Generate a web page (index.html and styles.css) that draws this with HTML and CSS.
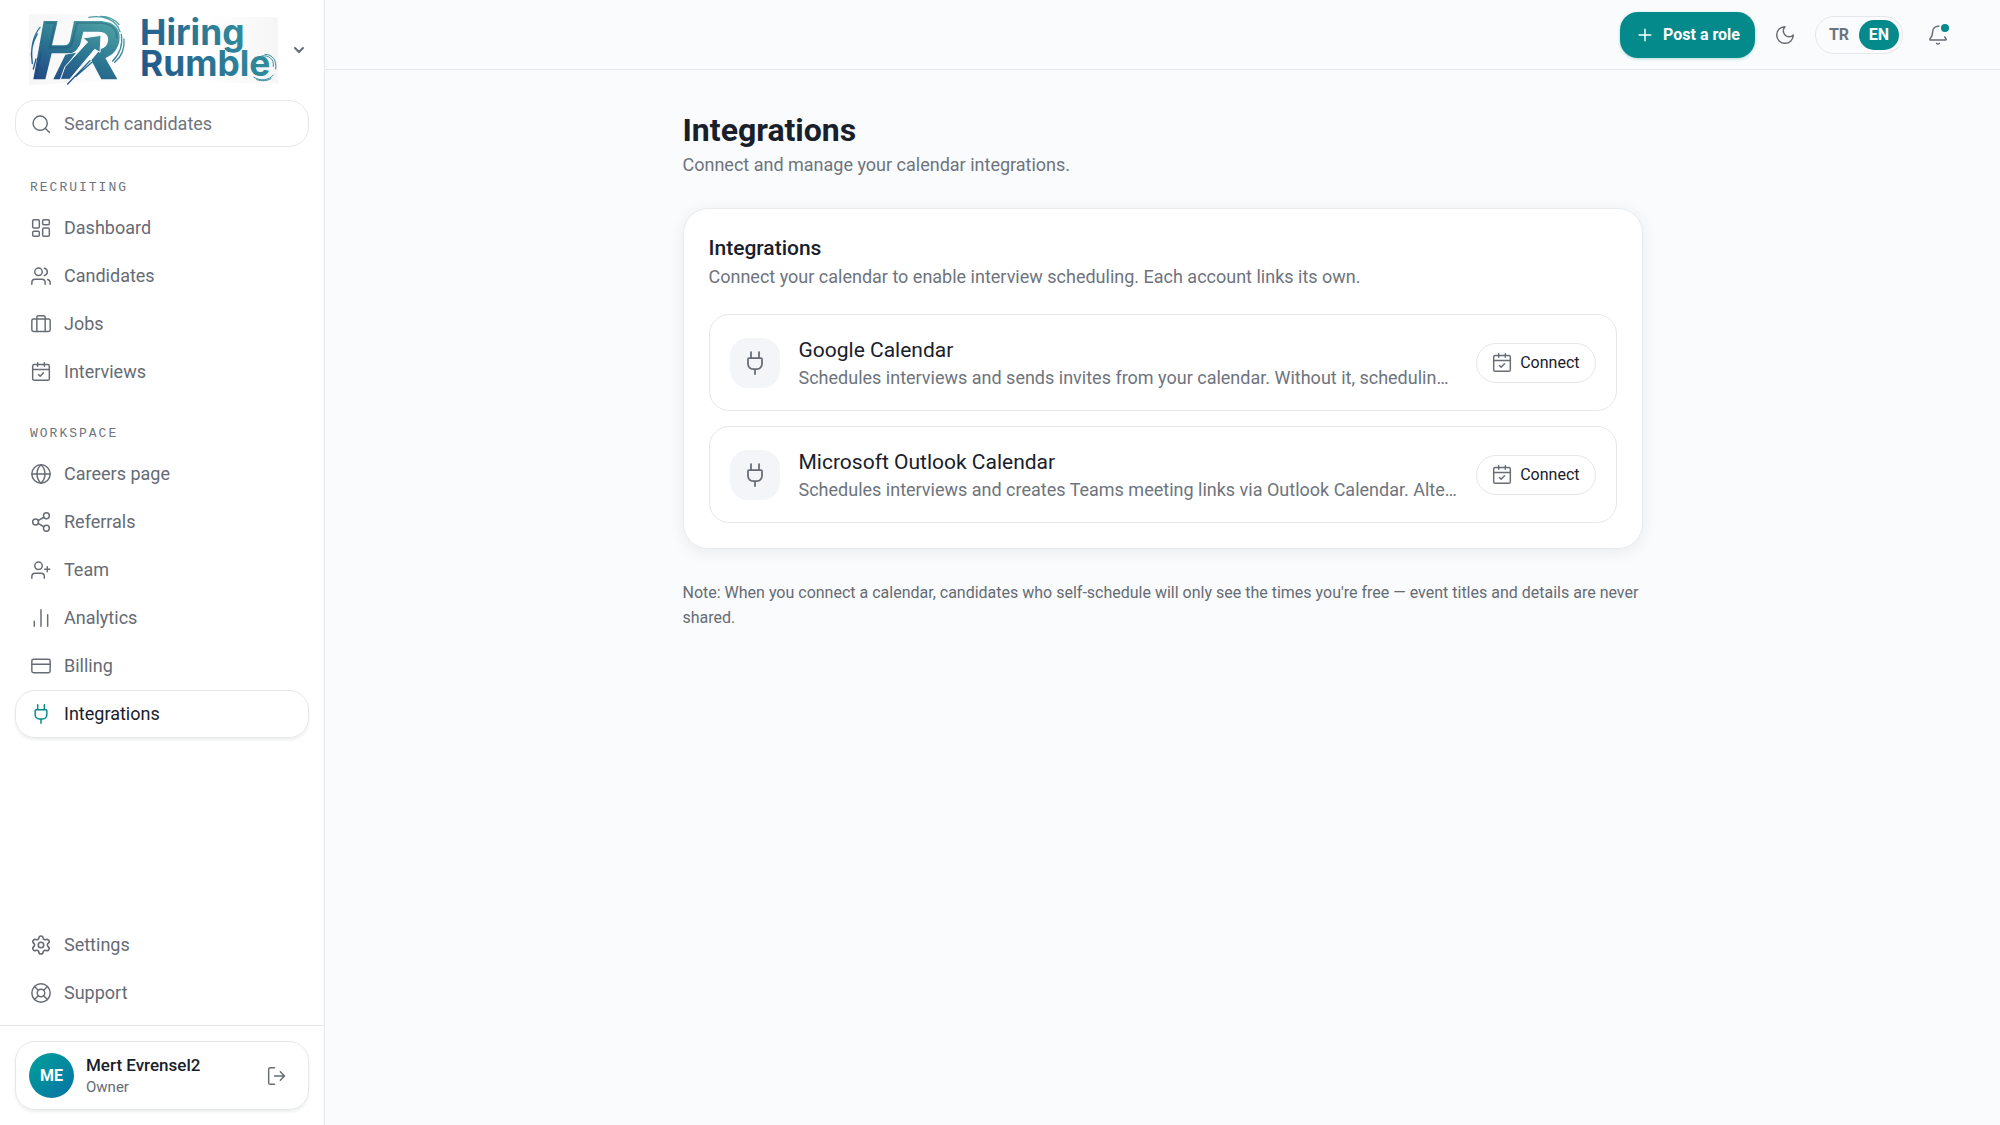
FILE: index.html
```html
<!DOCTYPE html>
<html lang="en">
<head>
    <meta charset="UTF-8">
    <meta name="viewport" content="width=device-width, initial-scale=1.0">
    <title>Integrations - Hiring Rumble</title>
    <link rel="stylesheet" href="styles.css">
</head>
<body>
    <svg class="sprite" aria-hidden="true">
        <symbol id="i-search" viewBox="0 0 24 24"><circle cx="11" cy="11" r="8.500"/><path d="m22 22-5-5"/></symbol>
        <symbol id="i-chevron" viewBox="0 0 24 24"><path d="m6 9 6 6 6-6"/></symbol>
        <symbol id="i-dashboard" viewBox="0 0 24 24"><rect x="2" y="2" width="8" height="10" rx="1.500"/><rect x="14" y="2" width="8" height="6" rx="1.500"/><rect x="14" y="12" width="8" height="10" rx="1.500"/><rect x="2" y="16" width="8" height="6" rx="1.500"/></symbol>
        <symbol id="i-users" viewBox="0 0 24 24"><path d="M17 22v-2a4 4 0 0 0-4-4H5a4 4 0 0 0-4 4v2"/><circle cx="9" cy="7" r="4.500"/><path d="M23 22v-2a4 4 0 0 0-3-3.870M16 2.600a4.500 4.500 0 0 1 0 8.800"/></symbol>
        <symbol id="i-briefcase" viewBox="0 0 24 24"><rect x="1" y="6" width="22" height="15" rx="2"/><path d="M17 21V4a2 2 0 0 0-2-2H9a2 2 0 0 0-2 2v17"/></symbol>
        <symbol id="i-calendar" viewBox="0 0 24 24"><path d="M8 1v4M16 1v4M2 9h20"/><rect x="2" y="3" width="20" height="19" rx="2"/><path d="m9 15 2 2 4-4"/></symbol>
        <symbol id="i-globe" viewBox="0 0 24 24"><circle cx="12" cy="12" r="11"/><path d="M12 1a15 15 0 0 0 0 22 15 15 0 0 0 0-22M1 12h22"/></symbol>
        <symbol id="i-share" viewBox="0 0 24 24"><circle cx="18.500" cy="4.500" r="3.500"/><circle cx="5.500" cy="12" r="3.500"/><circle cx="18.500" cy="19.500" r="3.500"/><path d="m8.500 13.700 7 4M15.500 6.300l-7 4"/></symbol>
        <symbol id="i-user-plus" viewBox="0 0 24 24"><path d="M16 22v-2a4 4 0 0 0-4-4H5a4 4 0 0 0-4 4v2"/><circle cx="9" cy="7" r="4.500"/><path d="M19.500 8v6M22.500 11h-6"/></symbol>
        <symbol id="i-chart" viewBox="0 0 24 24"><path d="M12 22V2M20 22V8M4 22v-6"/></symbol>
        <symbol id="i-card" viewBox="0 0 24 24"><rect x="1" y="4" width="22" height="16" rx="2"/><path d="M1 10h22"/></symbol>
        <symbol id="i-plug" viewBox="0 0 24 24"><path d="M12 23v-5M16 7V1M8 7V1M18 7a1 1 0 0 1 1 1v5a5 5 0 0 1-5 5h-4a5 5 0 0 1-5-5V8a1 1 0 0 1 1-1z"/></symbol>
        <symbol id="i-settings" viewBox="1 1 22 22"><path d="M9.671 4.136a2.34 2.34 0 0 1 4.659 0 2.34 2.34 0 0 0 3.319 1.915 2.34 2.34 0 0 1 2.33 4.033 2.34 2.34 0 0 0 0 3.831 2.34 2.34 0 0 1-2.33 4.033 2.34 2.34 0 0 0-3.319 1.915 2.34 2.34 0 0 1-4.659 0 2.34 2.34 0 0 0-3.32-1.915 2.34 2.34 0 0 1-2.33-4.033 2.34 2.34 0 0 0 0-3.831A2.34 2.34 0 0 1 6.35 6.051a2.34 2.34 0 0 0 3.319-1.915"/><circle cx="12" cy="12" r="3"/></symbol>
        <symbol id="i-support" viewBox="0 0 24 24"><circle cx="12" cy="12" r="11"/><circle cx="12" cy="12" r="4.500"/><path d="m4.200 4.200 4.600 4.600M15.200 8.800l4.600-4.600M15.200 15.200l4.600 4.600M8.800 15.200l-4.600 4.600"/></symbol>
        <symbol id="i-logout" viewBox="0 0 24 24"><path d="M9 22H4a2 2 0 0 1-2-2V4a2 2 0 0 1 2-2h5M16 17l5-5-5-5M21 12H9"/></symbol>
        <symbol id="i-plus" viewBox="0 0 24 24"><path d="M5 12h14M12 5v14"/></symbol>
        <symbol id="i-moon" viewBox="0 0 24 24"><path d="M12 2a7 7 0 0 0 10 10 10 10 0 1 1-10-10Z"/></symbol>
        <symbol id="i-bell" viewBox="0 0 24 24"><path d="M10.300 22a2 2 0 0 0 3.400 0M13 1.500A6.500 6.500 0 0 0 5.600 8c0 4.600-1.300 6.200-3.100 8.600a.8.8 0 0 0 .6 1.400h18a.8.8 0 0 0 .7-1.200c-.6-.8-1.200-1.500-1.700-2.600"/></symbol>
    </svg>

    <div class="app">
        <aside class="sidebar">
            <button class="brand" aria-label="Hiring Rumble">
                <svg class="logo" viewBox="87 42 747 213" aria-hidden="true">
                    <defs>
                        <linearGradient id="mark" gradientUnits="userSpaceOnUse" x1="150" y1="250" x2="240" y2="40">
                            <stop offset="0" stop-color="#234a86"/>
                            <stop offset="0.5" stop-color="#2b7591"/>
                            <stop offset="1" stop-color="#4a9ea3"/>
                        </linearGradient>
                        <linearGradient id="word" gradientUnits="userSpaceOnUse" x1="430" y1="230" x2="700" y2="60">
                            <stop offset="0" stop-color="#21568a"/>
                            <stop offset="1" stop-color="#2f8a9b"/>
                        </linearGradient>
                        <linearGradient id="paper">
                            <stop offset="0" stop-color="#f6f6f7"/>
                            <stop offset="0.4" stop-color="#ffffff"/>
                            <stop offset="0.7" stop-color="#ffffff"/>
                            <stop offset="1" stop-color="#f6f6f7"/>
                        </linearGradient>
                    </defs>
                    <path d="M87 42h130l617 10v198l-550-5-197 10z" fill="url(#paper)"/>
                    <!-- H -->
                    <path d="M131 63h42l-17 73h36c10 0 15-5 18-14l12-59h32l-17 71c-4 15-12 23-27 26l-55 0-19 78h-36z" fill="url(#mark)"/>
                    <!-- R -->
                    <path d="M240 63h56c48 0 69 26 62 61-5 25-20 42-42 50l36 64h-48l-30-57 28-34c13-3 20-12 22-24 3-17-8-28-28-28h-46l-10 40-12 14z" fill="url(#mark)"/>
                    <path d="M196 164l32-6-32 42-14 38h-22z" fill="url(#mark)"/>
                    <!-- arrow -->
                    <path d="M303 106l-54 8 14 12-68 74-14 38h28l75-90 16 9z" fill="url(#mark)" stroke="#f3f9f9" stroke-width="3"/>
                    <path d="M137 69h28l-16 74h48c11 0 17-6 20-17l14-57h62c41 0 59 18 57 46M106 233l18-76" fill="none" stroke="#173d67" stroke-opacity="0.3" stroke-width="5"/>
                    <g fill="none" stroke="url(#mark)" stroke-width="4" stroke-linecap="round">
                        <path d="M267 52c45-8 82 8 93 43M302 49c26 0 43 10 55 25M364 103c5 34-3 57-26 80M372 117c2 27-6 52-28 70"/>
                        <path d="M120 82c-23 28-29 62-23 109M112 102c-17 30-20 57-16 77M100 207l8-30M203 252l67-70M228 229l53-47"/>
                    </g>
                    <text class="wordmark" x="420" y="136" fill="url(#word)">Hiring</text>
                    <text class="wordmark" x="420" y="229" fill="url(#word)">Rumble</text>
                    <g fill="none" stroke="#358b9c" stroke-width="3" stroke-linecap="round">
                        <path d="M785 168c22-4 38 10 35 31M795 163c23 0 36 18 32 44M762 232c20 12 44 10 58-7M770 239c16 5 31 4 43-3"/>
                    </g>
                </svg>
                <svg class="icon chevron"><use href="#i-chevron"/></svg>
            </button>

            <label class="search">
                <svg class="icon"><use href="#i-search"/></svg>
                <input type="search" placeholder="Search candidates" aria-label="Search candidates">
            </label>

            <nav class="nav">
                <h2 class="nav-title">RECRUITING</h2>
                <a class="nav-link" href="#"><svg class="icon"><use href="#i-dashboard"/></svg>Dashboard</a>
                <a class="nav-link" href="#"><svg class="icon"><use href="#i-users"/></svg>Candidates</a>
                <a class="nav-link" href="#"><svg class="icon"><use href="#i-briefcase"/></svg>Jobs</a>
                <a class="nav-link" href="#"><svg class="icon"><use href="#i-calendar"/></svg>Interviews</a>
            </nav>
            <nav class="nav">
                <h2 class="nav-title">WORKSPACE</h2>
                <a class="nav-link" href="#"><svg class="icon"><use href="#i-globe"/></svg>Careers page</a>
                <a class="nav-link" href="#"><svg class="icon"><use href="#i-share"/></svg>Referrals</a>
                <a class="nav-link" href="#"><svg class="icon"><use href="#i-user-plus"/></svg>Team</a>
                <a class="nav-link" href="#"><svg class="icon"><use href="#i-chart"/></svg>Analytics</a>
                <a class="nav-link" href="#"><svg class="icon"><use href="#i-card"/></svg>Billing</a>
                <a class="nav-link active" href="#" aria-current="page"><svg class="icon"><use href="#i-plug"/></svg>Integrations</a>
            </nav>
            <nav class="nav nav-bottom">
                <a class="nav-link" href="#"><svg class="icon"><use href="#i-settings"/></svg>Settings</a>
                <a class="nav-link" href="#"><svg class="icon"><use href="#i-support"/></svg>Support</a>
            </nav>

            <div class="account">
                <div class="account-card">
                    <span class="avatar">ME</span>
                    <div class="account-text">
                        <div class="account-name">Mert Evrensel2</div>
                        <div class="account-role">Owner</div>
                    </div>
                    <button class="icon-button" aria-label="Log out"><svg class="icon"><use href="#i-logout"/></svg></button>
                </div>
            </div>
        </aside>

        <div class="page">
            <header class="topbar">
                <button class="post-button"><svg class="icon"><use href="#i-plus"/></svg>Post a role</button>
                <button class="icon-button" aria-label="Dark mode"><svg class="icon"><use href="#i-moon"/></svg></button>
                <div class="lang">
                    <button class="lang-option">TR</button>
                    <button class="lang-option selected">EN</button>
                </div>
                <button class="icon-button bell" aria-label="Notifications">
                    <svg class="icon"><use href="#i-bell"/></svg>
                    <span class="dot"></span>
                </button>
            </header>

            <main class="content">
                <h1>Integrations</h1>
                <p class="lead">Connect and manage your calendar integrations.</p>

                <section class="card">
                    <h2>Integrations</h2>
                    <p class="lead">Connect your calendar to enable interview scheduling. Each account links its own.</p>
                    <div class="rows">
                        <div class="row">
                            <span class="row-icon"><svg class="icon"><use href="#i-plug"/></svg></span>
                            <div class="row-text">
                                <h3>Google Calendar</h3>
                                <p>Schedules interviews and sends invites from your calendar. Without it, scheduling is off.</p>
                            </div>
                            <button class="connect"><svg class="icon"><use href="#i-calendar"/></svg>Connect</button>
                        </div>
                        <div class="row">
                            <span class="row-icon"><svg class="icon"><use href="#i-plug"/></svg></span>
                            <div class="row-text">
                                <h3>Microsoft Outlook Calendar</h3>
                                <p>Schedules interviews and creates Teams meeting links via Outlook Calendar. Alternative.</p>
                            </div>
                            <button class="connect"><svg class="icon"><use href="#i-calendar"/></svg>Connect</button>
                        </div>
                    </div>
                </section>

                <p class="note">Note: When you connect a calendar, candidates who self-schedule will only see the times you're free — event titles and details are never shared.</p>
            </main>
        </div>
    </div>
</body>
</html>
```

FILE: styles.css
```css
* {
    box-sizing: border-box;
}
body {
    margin: 0;
    font-family: Roboto, "Liberation Sans", sans-serif;
    font-size: 18px;
    line-height: 24px;
    color: #18202b;
    background: #f9fbfc;
}
h1, h2, h3, p {
    margin: 0;
}
button, input {
    font: inherit;
    color: inherit;
    background: none;
    border: 0;
    padding: 0;
}
button {
    cursor: pointer;
}
.sprite {
    display: none;
}
.icon {
    width: 20px;
    height: 20px;
    flex: none;
    fill: none;
    stroke: currentColor;
    stroke-width: 1.75;
    stroke-linecap: round;
    stroke-linejoin: round;
}
.app {
    display: flex;
    min-height: 100vh;
}

/* sidebar */
.sidebar {
    width: 325px;
    flex: none;
    display: flex;
    flex-direction: column;
    background: #fff;
    border-right: 1px solid #e4e8eb;
    color: #666b74;
}
.brand {
    display: flex;
    align-items: center;
    justify-content: space-between;
    margin: 14px 15px 15px;
    padding: 0 2px 0 14px;
}
.logo {
    width: 249px;
    height: 71px;
    overflow: visible;
}
.wordmark {
    font-family: Inter, sans-serif;
    font-size: 106px;
    font-weight: 700;
}
.chevron {
    width: 16px;
    height: 16px;
    stroke-width: 3;
}
.search {
    display: flex;
    align-items: center;
    gap: 13px;
    height: 47px;
    margin: 0 15px 3px;
    padding: 0 15px;
    border: 1px solid #e5e8ea;
    border-radius: 20px;
}
.search input {
    flex: 1;
    min-width: 0;
    outline: none;
}
.search input::placeholder {
    color: #6e747d;
    opacity: 1;
}
.nav {
    display: flex;
    flex-direction: column;
    padding: 27px 15px 0;
}
.nav-title {
    margin-bottom: 5px;
    padding-left: 15px;
    font-family: "Liberation Mono", monospace;
    font-size: 13px;
    font-weight: 400;
    line-height: 22px;
    letter-spacing: 2px;
    color: #6e747d;
}
.nav-link {
    display: flex;
    align-items: center;
    gap: 13px;
    height: 48px;
    padding: 0 15px;
    border: 1px solid transparent;
    border-radius: 20px;
    color: inherit;
    text-decoration: none;
}
.nav-link.active {
    border-color: #e5e8ea;
    box-shadow: 0 2px 3px rgba(24, 32, 43, 0.08);
    color: #18202b;
}
.nav-link.active .icon {
    color: #058a8b;
}
.nav-bottom {
    margin-top: auto;
    padding-bottom: 8px;
}
.account {
    padding: 15px;
    border-top: 1px solid #e4e8eb;
}
.account-card {
    display: flex;
    align-items: center;
    gap: 12px;
    padding: 11px 13px;
    border: 1px solid #e5e8ea;
    border-radius: 20px;
    box-shadow: 0 2px 3px rgba(24, 32, 43, 0.08);
}
.avatar {
    display: flex;
    align-items: center;
    justify-content: center;
    width: 45px;
    height: 45px;
    border-radius: 50%;
    background: linear-gradient(135deg, #00a09a, #0873a5);
    color: #fff;
    font-size: 16px;
    font-weight: 700;
}
.account-text {
    flex: 1;
}
.account-name {
    color: #18202b;
    font-size: 17px;
    font-weight: 500;
}
.account-role {
    font-size: 15px;
    line-height: 21px;
}
.icon-button {
    display: flex;
    align-items: center;
    justify-content: center;
    width: 36px;
    height: 36px;
    color: #666b74;
}

/* top bar */
.page {
    flex: 1;
    min-width: 0;
}
.topbar {
    display: flex;
    align-items: center;
    justify-content: flex-end;
    gap: 12px;
    height: 70px;
    padding: 0 44px;
    border-bottom: 1px solid #e4e8eb;
}
.post-button {
    display: flex;
    align-items: center;
    gap: 8px;
    height: 46px;
    padding: 0 15px;
    border-radius: 18px;
    background: #058a8b;
    box-shadow: 0 1px 3px rgba(5, 138, 139, 0.3);
    color: #fff;
    font-size: 16px;
    font-weight: 700;
}
.lang {
    display: flex;
    padding: 3px;
    border: 1px solid #e5e8ea;
    border-radius: 20px;
}
.lang-option {
    width: 40px;
    height: 30px;
    border-radius: 15px;
    color: #6e747d;
    font-size: 16px;
    font-weight: 700;
}
.lang-option.selected {
    background: #058a8b;
    color: #fff;
}
.bell {
    position: relative;
    margin-left: 5px;
}
.dot {
    position: absolute;
    top: 7px;
    right: 7px;
    width: 8px;
    height: 8px;
    border-radius: 50%;
    background: #058a8b;
}

/* content */
.content {
    max-width: 960px;
    margin: 0 auto;
    padding: 40px 0;
}
h1 {
    font-size: 32px;
    line-height: 40px;
}
.lead {
    color: #6e747d;
    line-height: 30px;
}
.card {
    margin-top: 28px;
    padding: 25px;
    border: 1px solid #e8ebee;
    border-radius: 25px;
    background: #fff;
    box-shadow: 0 3px 16px rgba(24, 32, 43, 0.07);
}
.card h2 {
    font-size: 21px;
    font-weight: 500;
    line-height: 28px;
}
.rows {
    display: grid;
    grid-template-columns: minmax(0, 1fr);
    gap: 15px;
    margin-top: 22px;
}
.row {
    display: flex;
    align-items: center;
    gap: 19px;
    padding: 20px;
    border: 1px solid #e5e8ea;
    border-radius: 20px;
}
.row-icon {
    display: flex;
    flex: none;
    align-items: center;
    justify-content: center;
    width: 50px;
    height: 50px;
    border-radius: 18px;
    background: #f3f5f8;
    color: #666b74;
}
.row-icon .icon {
    width: 24px;
    height: 24px;
}
.row-text {
    flex: 1;
    min-width: 0;
}
.row-text h3 {
    font-size: 21px;
    font-weight: 400;
    line-height: 30px;
}
.row-text p {
    color: #6e747d;
    line-height: 25px;
    overflow: hidden;
    text-overflow: ellipsis;
    white-space: nowrap;
}
.connect {
    display: flex;
    align-items: center;
    gap: 8px;
    height: 40px;
    padding: 0 15px;
    border: 1px solid #e5e8ea;
    border-radius: 20px;
    font-size: 16px;
}
.connect .icon {
    color: #666b74;
}
.note {
    margin-top: 31px;
    color: #666b74;
    font-size: 16px;
    line-height: 25px;
}
```
